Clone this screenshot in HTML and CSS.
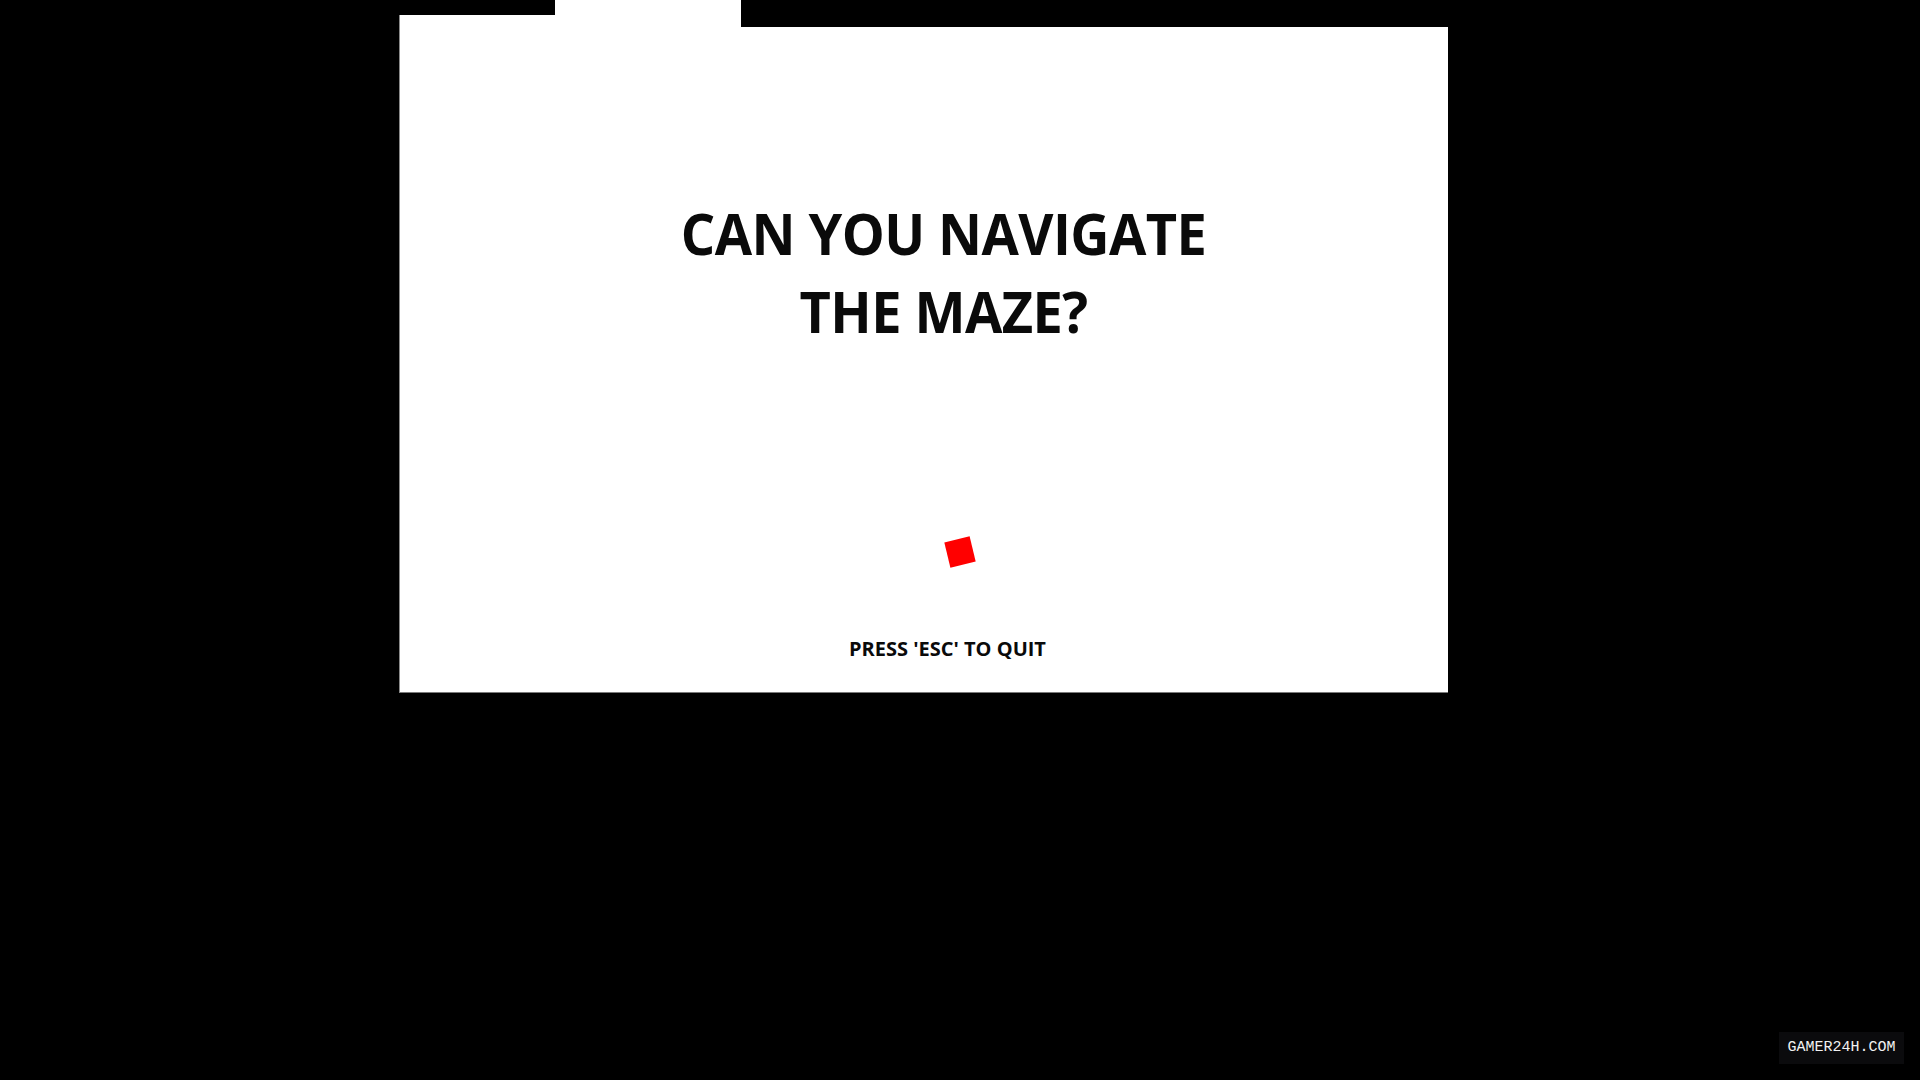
FILE: index.html
```html
<!DOCTYPE html>
<html>
<head>
<meta charset="utf-8">
<title>Maze</title>
<link rel="stylesheet" href="styles.css">
</head>
<body>
<div class="stage">
  <div class="tabs">
    <div class="tab-low"></div>
    <div class="tab-high"></div>
  </div>
  <div class="panel">
    <h1 class="title"><span class="title-text">CAN YOU NAVIGATE<br>THE MAZE?</span></h1>
    <div class="player"></div>
    <p class="hint"><span class="hint-text">PRESS 'ESC' TO QUIT</span></p>
  </div>
</div>
<div class="watermark">GAMER24H.COM</div>
</body>
</html>
```
FILE: styles.css
```css
html, body {
  margin: 0;
  padding: 0;
  background: #000;
  width: 1920px;
  height: 1080px;
  overflow: hidden;
}
.stage {
  margin-left: 399px;
  width: 1049px;
}
.tabs {
  display: flex;
  align-items: flex-end;
  height: 27px;
}
.tab-low {
  width: 156px;
  height: 12px;
  background: #fff;
  border-left: 1px solid #8a8a8a;
  box-sizing: border-box;
}
.tab-high {
  width: 186px;
  height: 27px;
  background: #fff;
}
.panel {
  height: 666px;
  background: #fff;
  border-left: 1px solid #8a8a8a;
  border-bottom: 1px solid #7a7a7a;
  box-sizing: border-box;
  padding-top: 167px;
  font-family: "Open Sans", "Liberation Sans", sans-serif;
  font-weight: 700;
  color: #0a0a0a;
}
.title {
  margin: 0;
  font-size: 57px;
  line-height: 78px;
  font-weight: 700;
  text-align: center;
  padding-left: 40px;
}
.title-text {
  display: inline-block;
  letter-spacing: -0.6px;
  transform: scaleX(0.95);
}
.hint-text {
  display: inline-block;
}
.player {
  width: 26px;
  height: 26px;
  background: #ff0000;
  margin-top: 189px;
  margin-left: 547px;
  transform: rotate(-13.5deg);
}
.hint {
  margin: 70px 0 0 0;
  font-size: 20px;
  line-height: 28px;
  text-align: center;
  padding-left: 47px;
}
.watermark {
  position: absolute;
  right: 16px;
  bottom: 16px;
  width: 125px;
  height: 32px;
  background: #0b0b0d;
  color: #f2f2f2;
  font-family: "Liberation Mono", "DejaVu Sans Mono", monospace;
  font-size: 15px;
  line-height: 32px;
  text-align: center;
}
```
